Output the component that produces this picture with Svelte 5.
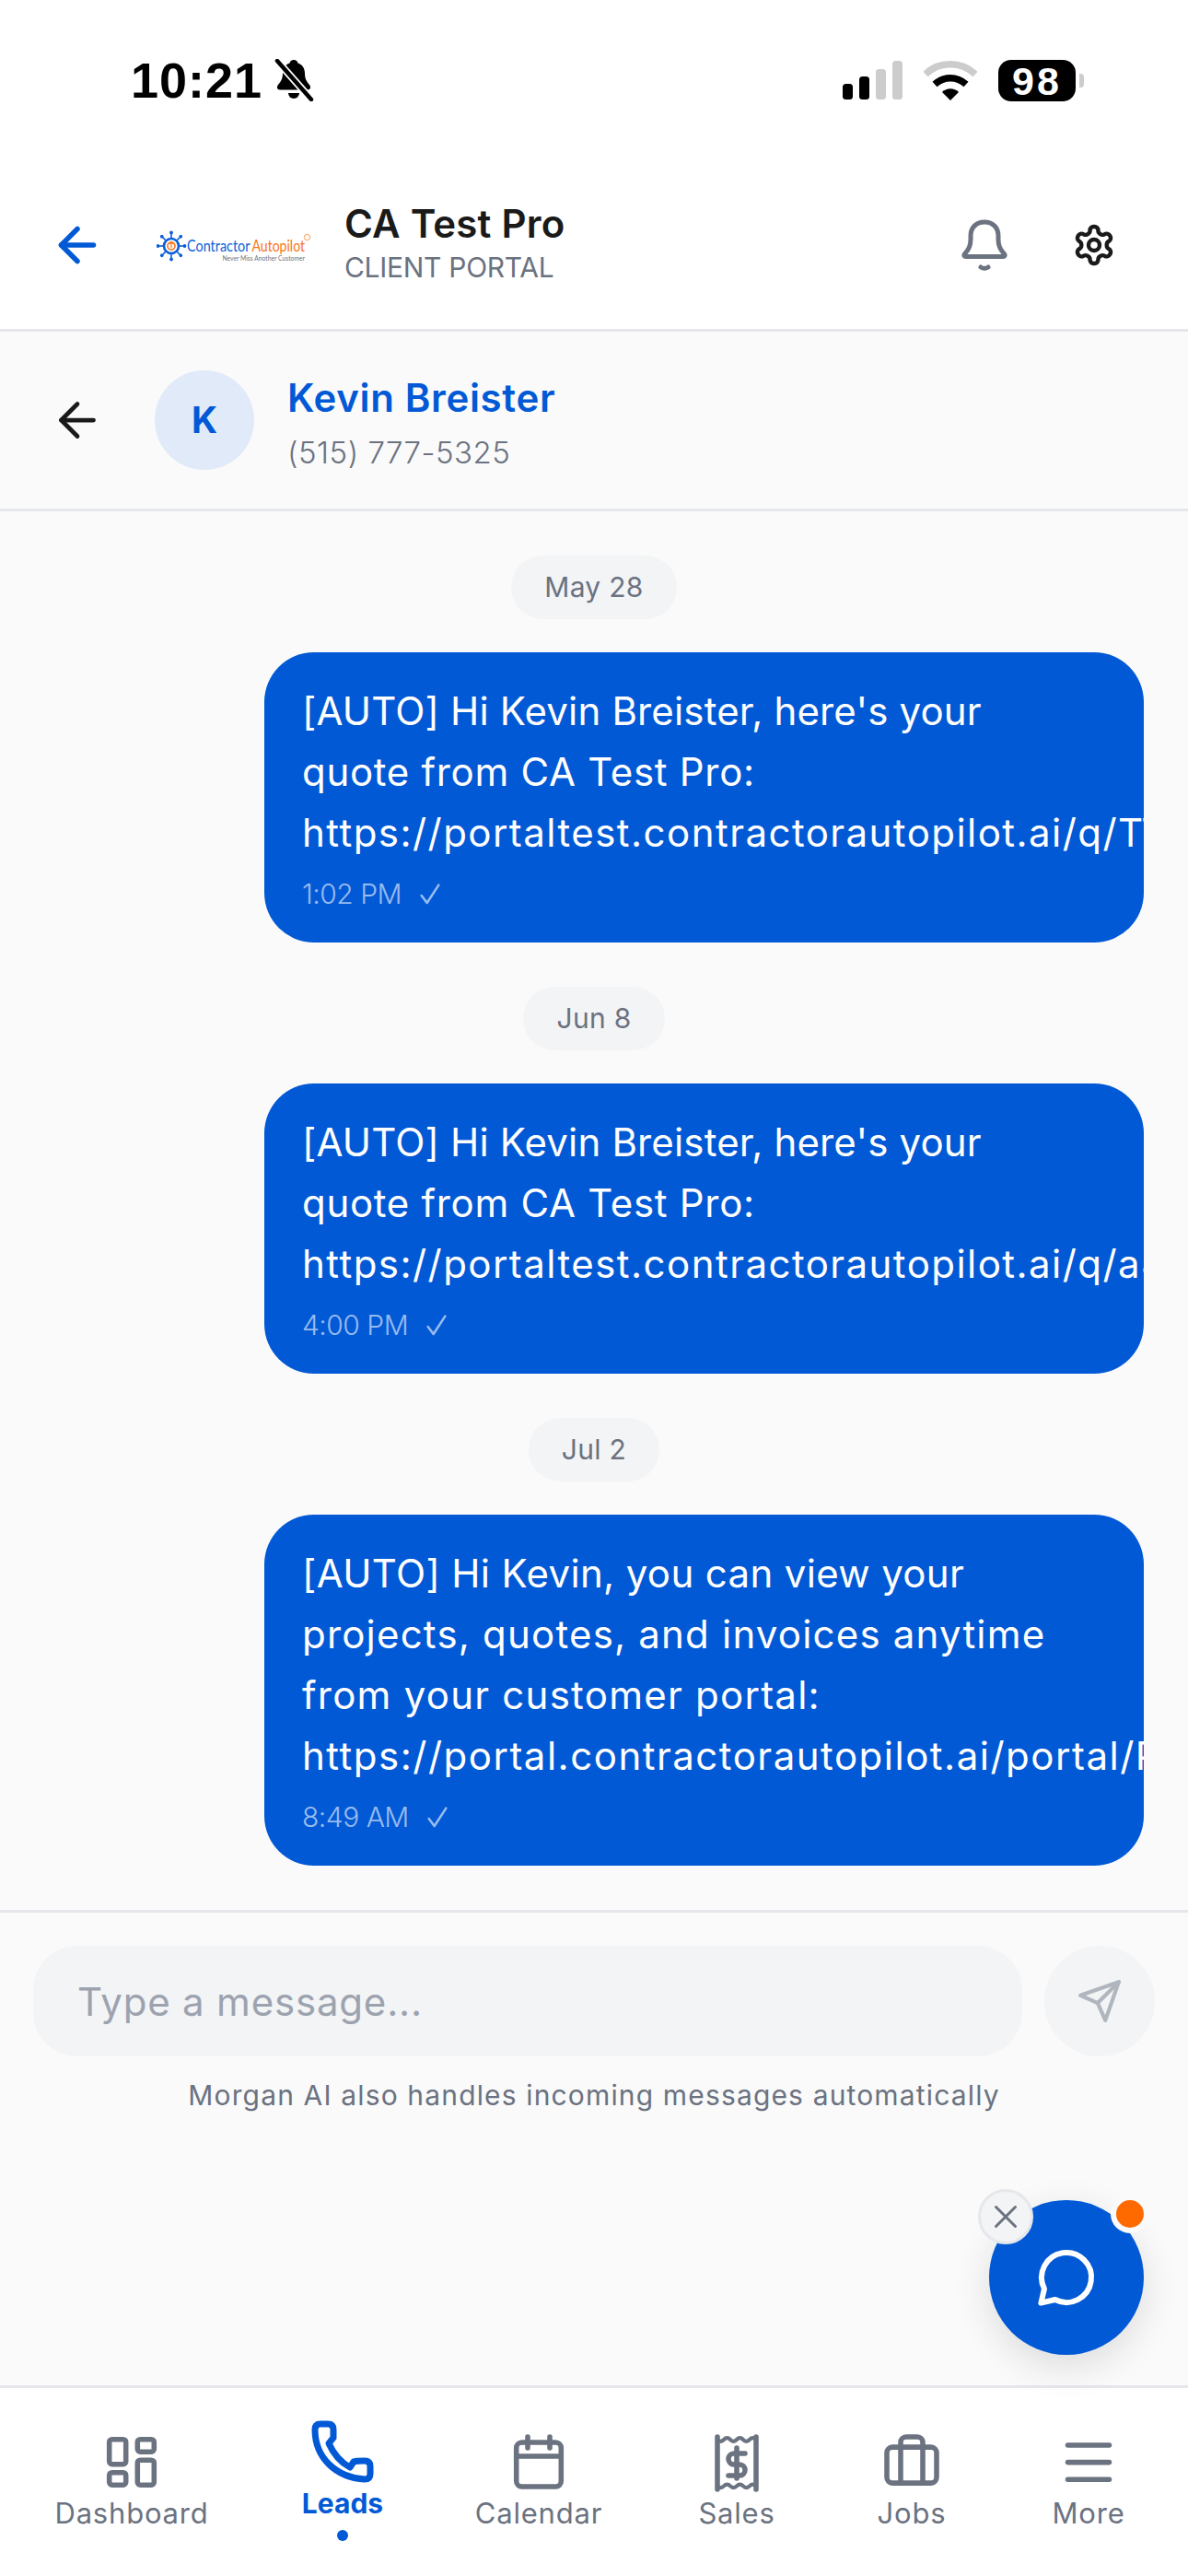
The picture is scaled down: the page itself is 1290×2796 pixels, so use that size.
<script>
  // ls = per-line tracking, Inter runs narrower than the reference face
  const threads = [
    {
      date: "May 28",
      lines: [
        { text: "[AUTO] Hi Kevin Breister, here's your", ls: 0.17 },
        { text: "quote from CA Test Pro:", ls: 0.7 },
        { text: "https://portaltest.contractorautopilot.ai/q/T7k2m9", ls: 1.45 },
      ],
      time: "1:02 PM",
    },
    {
      date: "Jun 8",
      lines: [
        { text: "[AUTO] Hi Kevin Breister, here's your", ls: 0.17 },
        { text: "quote from CA Test Pro:", ls: 0.7 },
        { text: "https://portaltest.contractorautopilot.ai/q/a4x8p1", ls: 1.45 },
      ],
      time: "4:00 PM",
    },
    {
      date: "Jul 2",
      lines: [
        { text: "[AUTO] Hi Kevin, you can view your", ls: 0.35 },
        { text: "projects, quotes, and invoices anytime", ls: 1.2 },
        { text: "from your customer portal:", ls: 1.25 },
        { text: "https://portal.contractorautopilot.ai/portal/Pv3n", ls: 1.5 },
      ],
      time: "8:49 AM",
    },
  ];
  const spokes = [0, 45, 90, 135, 180, 225, 270, 315];
</script>

<div class="page">
  <div class="status">
    <div class="status-left">
      <span class="clock">10:21</span>
      <svg class="silent" viewBox="0 0 44 46" width="44" height="46">
        <path d="M22 1c2.500 0 4 1.500 4.500 3.500 5 1.500 7.500 6 7.500 11 0 6 2 9 5 12.500 2 2.500 1 5.500-2 5.500H7c-3 0-4-3-2-5.500 3-3.500 5-6.500 5-12.500 0-5 2.500-9.500 7.500-11C18 2.500 19.500 1 22 1z" fill="#000" />
        <path d="M16 37h12a6 6 0 0 1-12 0z" fill="#000" />
        <path d="M4 2l37 42" stroke="#fff" stroke-width="8" />
        <path d="M4 2l37 42" stroke="#000" stroke-width="4.500" stroke-linecap="round" />
      </svg>
    </div>
    <div class="status-right">
      <svg viewBox="0 0 65 42" width="65" height="42">
        <rect x="0" y="25" width="11" height="17" rx="3.500" fill="#000" />
        <rect x="18" y="17" width="11" height="25" rx="3.500" fill="#000" />
        <rect x="36" y="9" width="11" height="33" rx="3.500" fill="#ccc" />
        <rect x="54" y="0" width="11" height="42" rx="3.500" fill="#ccc" />
      </svg>
      <svg viewBox="0 0 58 44" width="58" height="44">
        <path d="M2 15.500C17 1 41 1 56 15.500" fill="none" stroke="#ccc" stroke-width="7.500" />
        <path d="M12 26.500c10-9 24-9 34 0" fill="none" stroke="#000" stroke-width="7.500" />
        <path d="M20 35c5-5 13-5 18 0l-9 9z" fill="#000" />
      </svg>
      <div class="battery">
        <span class="battery-body">98</span>
        <span class="battery-nub"></span>
      </div>
    </div>
  </div>

  <header class="topbar">
    <svg class="back" viewBox="0 0 24 24" width="60" height="60" fill="none" stroke="#0259d6" stroke-width="2.200" stroke-linecap="round" stroke-linejoin="round">
      <path d="M19 12H5" /><path d="M12 19l-7-7 7-7" />
    </svg>
    <svg class="logo" viewBox="0 0 172 44" width="172" height="44">
      <g transform="translate(16 23)">
        {#each spokes as a}
          <g transform="rotate({a})">
            <line x1="0" y1="-9" x2="0" y2="-13" stroke="#0b5fd8" stroke-width="1.600" />
            <circle cx="0" cy="-14.500" r="1.900" fill="#0b5fd8" />
          </g>
        {/each}
        <circle r="8" fill="none" stroke="#0b5fd8" stroke-width="2.600" />
        <circle r="4" fill="none" stroke="#f97316" stroke-width="1.600" />
        <path d="M0 2V-4M-2-2l2-2.500L2-2" fill="none" stroke="#f97316" stroke-width="1.200" />
      </g>
      <text x="33" y="28.500" class="logo-a" textLength="68.500" lengthAdjust="spacingAndGlyphs">Contractor</text>
      <text x="103.500" y="28.500" class="logo-b" textLength="57.500" lengthAdjust="spacingAndGlyphs">Autopilot</text>
      <text x="71.500" y="39" class="logo-c" textLength="89.500" lengthAdjust="spacingAndGlyphs">Never Miss Another Customer</text>
      <circle cx="163.500" cy="13.500" r="3.200" fill="none" stroke="#f97316" stroke-width="0.700" />
    </svg>
    <div class="brand">
      <div class="brand-name">CA Test Pro</div>
      <div class="brand-sub">CLIENT PORTAL</div>
    </div>
    <div class="top-actions">
      <svg viewBox="0 0 50 56" width="50" height="56" fill="none" stroke="#6b7280" stroke-width="5" stroke-linecap="round" stroke-linejoin="round">
        <path d="M25 3C16 3 10 9 10 18v4c0 8-3 12-6 15-2 2-1 3.500 1 3.500h40c2 0 3-1.500 1-3.500-3-3-6-7-6-15v-4C40 9 34 3 25 3z" />
        <path d="M21 52q4 2.500 8 0" />
      </svg>
      <svg viewBox="0 0 24 24" width="48" height="48" fill="none" stroke="#1a1a1a" stroke-width="2.200" stroke-linecap="round" stroke-linejoin="round">
        <path d="M12.220 2h-.44a2 2 0 0 0-2 2v.18a2 2 0 0 1-1 1.730l-.43.25a2 2 0 0 1-2 0l-.15-.08a2 2 0 0 0-2.730.73l-.22.38a2 2 0 0 0 .73 2.730l.15.1a2 2 0 0 1 1 1.720v.51a2 2 0 0 1-1 1.740l-.15.09a2 2 0 0 0-.73 2.730l.22.38a2 2 0 0 0 2.730.73l.15-.08a2 2 0 0 1 2 0l.43.25a2 2 0 0 1 1 1.730V20a2 2 0 0 0 2 2h.44a2 2 0 0 0 2-2v-.18a2 2 0 0 1 1-1.730l.43-.25a2 2 0 0 1 2 0l.15.08a2 2 0 0 0 2.730-.73l.22-.39a2 2 0 0 0-.73-2.730l-.15-.08a2 2 0 0 1-1-1.740v-.5a2 2 0 0 1 1-1.740l.15-.09a2 2 0 0 0 .73-2.730l-.22-.38a2 2 0 0 0-2.730-.73l-.15.08a2 2 0 0 1-2 0l-.43-.25a2 2 0 0 1-1-1.730V4a2 2 0 0 0-2-2z" />
        <circle cx="12" cy="12" r="3" />
      </svg>
    </div>
  </header>

  <div class="contact">
    <svg class="back" viewBox="0 0 24 24" width="60" height="60" fill="none" stroke="#1a1a1a" stroke-width="1.900" stroke-linecap="round" stroke-linejoin="round">
      <path d="M19 12H5" /><path d="M12 19l-7-7 7-7" />
    </svg>
    <div class="avatar">K</div>
    <div class="contact-text">
      <div class="contact-name">Kevin Breister</div>
      <div class="contact-phone">(515) 777-5325</div>
    </div>
  </div>

  <main class="messages">
    {#each threads as t}
      <div class="chip">{t.date}</div>
      <div class="bubble">
        {#each t.lines as line}
          <div class="line" style:letter-spacing="{line.ls}px">{line.text}</div>
        {/each}
        <div class="meta">
          <span>{t.time}</span>
          <svg viewBox="0 0 24 24" width="32" height="32" fill="none" stroke="currentColor" stroke-width="1.900" stroke-linecap="round" stroke-linejoin="round">
            <path d="M5 13.500l4.500 6L19 5" />
          </svg>
        </div>
      </div>
    {/each}
  </main>

  <div class="composer">
    <div class="composer-row">
      <input class="field" placeholder="Type a message..." />
      <div class="send">
        <svg viewBox="0 0 24 24" width="50" height="50" fill="none" stroke="#b0b6be" stroke-width="2" stroke-linecap="round" stroke-linejoin="round">
          <path d="M22 2L11 13" /><path d="M22 2l-7 20-4-9-9-4z" />
        </svg>
      </div>
    </div>
    <div class="note">Morgan AI also handles incoming messages automatically</div>
  </div>

  <nav class="tabs">
    <div class="tab">
      <svg viewBox="0 0 24 24" width="72" height="72" fill="none" stroke="currentColor" stroke-width="1.850" stroke-linecap="round" stroke-linejoin="round">
        <rect x="3.900" y="3.900" width="6" height="9" rx="1" /><rect x="14.100" y="3.900" width="6" height="4.500" rx="1" />
        <rect x="14.100" y="11.400" width="6" height="9" rx="1" /><rect x="3.900" y="15.900" width="6" height="4.500" rx="1" />
      </svg>
      <span>Dashboard</span>
    </div>
    <div class="tab active">
      <svg viewBox="0 0 69 68" width="69" height="68" fill="none" stroke="currentColor" stroke-width="7" stroke-linecap="round" stroke-linejoin="round">
        <path d="M4 10Q4 4 10 4H18Q24 4 24 10V19L19 25Q27 43 42 51L46 45Q48 44 58 44Q64 44 64 50V58Q64 64 58 64C27 62 4 41 4 10Z" />
      </svg>
      <span>Leads</span>
      <i class="dot"></i>
    </div>
    <div class="tab">
      <svg viewBox="0 0 24 24" width="72" height="72" fill="none" stroke="currentColor" stroke-width="1.850" stroke-linecap="round" stroke-linejoin="round">
        <rect x="3.900" y="5" width="16.200" height="16" rx="2" /><path d="M8 3v4M16 3v4M3.900 10h16.200" />
      </svg>
      <span>Calendar</span>
    </div>
    <div class="tab">
      <svg viewBox="0 0 24 24" width="72" height="72" fill="none" stroke="currentColor" stroke-width="1.850" stroke-linecap="round" stroke-linejoin="round">
        <path d="M5 3v19M19 3v19" />
        <path d="M5 4q1.170 1.200 2.330 0t2.330 0 2.330 0 2.330 0 2.330 0 2.330 0M5 20.800q1.170 1.200 2.330 0t2.330 0 2.330 0 2.330 0 2.330 0 2.330 0" stroke-width="1.400" />
        <path d="M15 9h-4a2 2 0 0 0 0 4h2a2 2 0 0 1 0 4H9M12 7v11" />
      </svg>
      <span>Sales</span>
    </div>
    <div class="tab">
      <svg viewBox="0 0 24 24" width="72" height="72" fill="none" stroke="currentColor" stroke-width="1.850" stroke-linecap="round" stroke-linejoin="round">
        <rect x="3" y="6.700" width="18" height="13" rx="2" />
        <path d="M8 19.700V5a2 2 0 0 1 2-2h4a2 2 0 0 1 2 2v14.700" />
      </svg>
      <span>Jobs</span>
    </div>
    <div class="tab">
      <svg viewBox="0 0 24 24" width="72" height="72" fill="none" stroke="currentColor" stroke-width="1.850" stroke-linecap="round">
        <path d="M4.500 6h15M4.500 12.200h15M4.500 18.400h15" />
      </svg>
      <span>More</span>
    </div>
  </nav>

  <div class="fab">
    <svg viewBox="0 0 24 24" width="72" height="72" fill="none" stroke="#fff" stroke-width="2" stroke-linecap="round" stroke-linejoin="round">
      <path d="M7.900 20A9 9 0 1 0 4 16.100L2.800 21.200z" />
    </svg>
    <span class="badge"></span>
    <span class="dismiss">
      <svg viewBox="0 0 24 24" width="36" height="36" fill="none" stroke="#6b7280" stroke-width="2" stroke-linecap="round">
        <path d="M5 5l14 14M19 5L5 19" />
      </svg>
    </span>
  </div>
</div>

<style>
  :global(body) {
    background: #fff;
  }
  .page {
    position: relative;
    width: 1290px;
    height: 2796px;
    display: flex;
    flex-direction: column;
    overflow: hidden;
    background: #fafafa;
    font-family: Inter, "Liberation Sans", sans-serif;
  }
  svg {
    display: block;
    flex: none;
  }

  .status {
    height: 174px;
    flex: none;
    display: flex;
    justify-content: space-between;
    align-items: center;
    padding: 0 113px 0 142px;
    background: #fff;
  }
  .status-left {
    display: flex;
    align-items: center;
    gap: 12px;
  }
  .clock {
    font: 700 54px/1 "Liberation Sans", sans-serif;
    letter-spacing: 1px;
    color: #000;
  }
  .status-right {
    display: flex;
    align-items: center;
    gap: 23px;
  }
  .battery {
    display: flex;
    align-items: center;
    gap: 4px;
  }
  .battery-body {
    width: 84px;
    height: 45px;
    border-radius: 14px;
    background: #000;
    color: #fff;
    font: 700 43px/46px "Liberation Sans", sans-serif;
    letter-spacing: 3px;
    text-align: center;
  }
  .battery-nub {
    width: 5px;
    height: 15px;
    border-radius: 0 4px 4px 0;
    background: #ccc;
  }

  .topbar {
    height: 186px;
    flex: none;
    box-sizing: border-box;
    display: flex;
    align-items: center;
    padding: 0 78px 0 54px;
    background: #fff;
    border-bottom: 3px solid #e5e7eb;
  }
  .logo {
    margin: 0 0 0 56px;
  }
  .logo-a,
  .logo-b {
    font: 400 17px Lato, sans-serif;
  }
  .logo-a {
    fill: #0b5fd8;
  }
  .logo-b {
    fill: #f97316;
  }
  .logo-c {
    font: 400 7px Lato, sans-serif;
    fill: #6b7280;
  }
  .brand {
    margin: -3px 0 0 32px;
  }
  .brand-name {
    font-size: 42px;
    line-height: 52px;
    font-weight: 600;
    letter-spacing: 0.2px;
    color: #1a1a1a;
  }
  .brand-sub {
    font-size: 30px;
    line-height: 42px;
    color: #6b7280;
    letter-spacing: -0.3px;
  }
  .top-actions {
    margin-left: auto;
    display: flex;
    align-items: center;
    gap: 70px;
  }

  .contact {
    height: 195px;
    flex: none;
    box-sizing: border-box;
    display: flex;
    align-items: center;
    padding: 0 54px;
    border-bottom: 3px solid #e5e7eb;
  }
  .avatar {
    width: 108px;
    height: 108px;
    margin: 0 36px 0 54px;
    border-radius: 50%;
    background: #e0eaf8;
    color: #0259d6;
    font-size: 39px;
    font-weight: 700;
    line-height: 108px;
    text-align: center;
  }
  .contact-text {
    padding-top: 10px;
  }
  .contact-name {
    font-size: 42px;
    line-height: 60px;
    font-weight: 600;
    letter-spacing: 0.65px;
    color: #0259d6;
  }
  .contact-phone {
    font-size: 33px;
    line-height: 58px;
    font-weight: 300;
    color: #6b7280;
    letter-spacing: 0.5px;
  }

  .messages {
    flex: 1;
    min-height: 0;
    display: flex;
    flex-direction: column;
    align-items: flex-end;
    padding: 48px 48px 0 0;
  }
  .chip {
    align-self: center;
    margin: 0 -48px 36px 0;
    padding: 0 36px;
    height: 69px;
    border-radius: 35px;
    background: #f3f4f6;
    color: #6b7280;
    font-size: 30px;
    line-height: 69px;
    letter-spacing: 0.3px;
  }
  .bubble {
    box-sizing: border-box;
    width: 955px;
    margin-bottom: 48px;
    padding: 31px 0 32px 41px;
    border-radius: 54px;
    background: #0259d6;
    color: #fff;
    overflow: hidden;
  }
  .line {
    font-size: 42px;
    line-height: 66px;
    white-space: nowrap;
  }
  .meta {
    display: flex;
    align-items: center;
    gap: 15px;
    margin-top: 12px;
    height: 42px;
    font-size: 30px;
    font-weight: 300;
    letter-spacing: -0.5px;
    color: rgba(255, 255, 255, 0.6);
  }

  .composer {
    height: 516px;
    flex: none;
    box-sizing: border-box;
    padding: 36px 36px 0;
    border-top: 3px solid #e5e7eb;
  }
  .composer-row {
    display: flex;
    gap: 24px;
  }
  .field {
    flex: 1;
    min-width: 0;
    height: 120px;
    box-sizing: border-box;
    padding: 0 48px;
    border: 0;
    outline: 0;
    border-radius: 48px;
    background: #f3f4f6;
    font: 400 42px Inter, sans-serif;
    letter-spacing: 0.8px;
    color: #1a1a1a;
  }
  .field::placeholder {
    color: #9ca3af;
    opacity: 1;
  }
  .send {
    width: 120px;
    height: 120px;
    flex: none;
    display: flex;
    align-items: center;
    justify-content: center;
    border-radius: 50%;
    background: #f3f4f6;
  }
  .note {
    margin-top: 24px;
    font-size: 30px;
    line-height: 36px;
    letter-spacing: 1.15px;
    color: #6b7280;
    text-align: center;
  }

  .tabs {
    height: 207px;
    flex: none;
    box-sizing: border-box;
    display: grid;
    grid-template-columns: 286px 172px 254px 176px 204px 180px;
    background: #fff;
    border-top: 3px solid #e5e7eb;
  }
  .tab {
    display: flex;
    flex-direction: column;
    align-items: center;
    padding-top: 44px;
    color: #6b7280;
    font-size: 31px;
    line-height: 40px;
    letter-spacing: 0.8px;
  }
  .tab.active {
    padding-top: 35px;
    color: #0259d6;
    font-size: 30px;
    letter-spacing: 0;
    font-weight: 700;
  }
  .tab.active span {
    margin-top: 2px;
  }
  .dot {
    width: 12px;
    height: 12px;
    margin-top: 9px;
    border-radius: 50%;
    background: currentColor;
  }

  .fab {
    position: absolute;
    left: 1074px;
    top: 2388px;
    width: 168px;
    height: 168px;
    display: flex;
    align-items: center;
    justify-content: center;
    border-radius: 50%;
    background: #0259d6;
    box-shadow: 0 12px 40px rgba(0, 0, 0, 0.12);
  }
  .badge {
    position: absolute;
    right: -6px;
    top: -6px;
    width: 30px;
    height: 30px;
    border: 6px solid #fafafa;
    border-radius: 50%;
    background: #ff6a00;
  }
  .dismiss {
    position: absolute;
    left: -12px;
    top: -12px;
    width: 60px;
    height: 60px;
    box-sizing: border-box;
    display: flex;
    align-items: center;
    justify-content: center;
    border: 3px solid #e5e7eb;
    border-radius: 50%;
    background: #f3f4f6;
  }
</style>
